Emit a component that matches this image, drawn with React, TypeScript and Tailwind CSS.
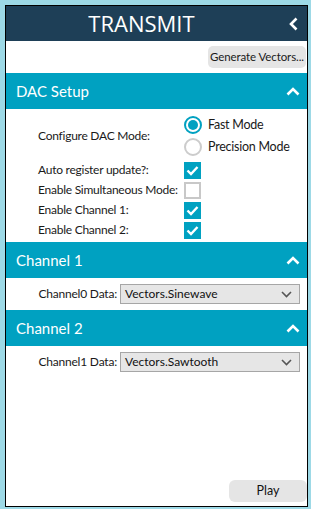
import React from "react";

const font = { fontFamily: 'Lato, "Open Sans", sans-serif' };
const titleFont = { fontFamily: '"Open Sans", sans-serif' };

function ChevronUp() {
  return (
    <svg width="14" height="9" viewBox="0 0 14 9" className="block">
      <polyline points="1.5,7.5 7,2 12.5,7.5" fill="none" stroke="white" strokeWidth="2.6" strokeLinecap="butt" strokeLinejoin="miter" />
    </svg>
  );
}

function SectionHeader({ title }: { title: string }) {
  return (
    <div className="h-[36px] bg-[#00a1c1] flex items-center justify-between pl-[10px] pr-[7px]">
      <span className="text-white text-[15px]">{title}</span>
      <ChevronUp />
    </div>
  );
}

function Checkbox({ checked }: { checked: boolean }) {
  return checked ? (
    <div className="w-[17px] h-[17px] bg-[#00a1c1] flex items-center justify-center">
      <svg width="13" height="11" viewBox="0 0 13 11">
        <polyline points="1.5,5.5 5,9 11.5,2" fill="none" stroke="white" strokeWidth="2.4" />
      </svg>
    </div>
  ) : (
    <div className="w-[17px] h-[17px] border-2 border-[#c8c8c8] bg-white" />
  );
}

function Radio({ checked }: { checked: boolean }) {
  return checked ? (
    <div className="w-[18px] h-[18px] rounded-full border-[2px] border-[#00a1c1] flex items-center justify-center">
      <div className="w-[10px] h-[10px] rounded-full bg-[#00a1c1]" />
    </div>
  ) : (
    <div className="w-[18px] h-[18px] rounded-full border-[2px] border-[#cccccc]" />
  );
}

function SelectRow({ label, value }: { label: string; value: string }) {
  return (
    <div className="h-[32px] flex items-center pl-[32px] pr-[7px]">
      <span className="text-[12px] tracking-[-0.2px] text-[#1a1a1a] w-[79px] whitespace-nowrap text-right">{label}</span>
      <div className="flex-1 h-[20px] ml-[3px] bg-[#e6e6e6] border border-[#a6a6a6] flex items-center justify-between pl-[4px] pr-[7px]">
        <span className="text-[12px] text-[#111]">{value}</span>
        <svg width="11" height="7" viewBox="0 0 11 7">
          <polyline points="1,1 5.5,5.5 10,1" fill="none" stroke="#555" strokeWidth="1.6" />
        </svg>
      </div>
    </div>
  );
}

export default function App() {
  const checks: [string, boolean][] = [
    ["Auto register update?:", true],
    ["Enable Simultaneous Mode:", false],
    ["Enable Channel 1:", true],
    ["Enable Channel 2:", true],
  ];
  return (
    <div className="w-[311px] h-[509px] bg-[#9dd9e6] pt-[5px] pl-[5px] pr-[3px] pb-[2px]" style={font}>
      <div className="h-full border border-black bg-white flex flex-col">
        <div className="h-[35px] bg-[#1e3f57] relative flex items-center justify-center">
          <span className="text-white text-[22px] mr-[30px]" style={titleFont}>TRANSMIT</span>
          <svg className="absolute right-[9px] top-[11px]" width="9" height="14" viewBox="0 0 9 14">
            <polyline points="7.5,1.5 2,7 7.5,12.5" fill="none" stroke="white" strokeWidth="2.6" />
          </svg>
        </div>
        <div className="h-[32px] flex items-center justify-end pr-[1px]">
          <button className="h-[22px] w-[98px] bg-[#e5e5e5] rounded-[5px] text-[11.5px] tracking-[-0.1px] text-[#1a1a1a] whitespace-nowrap">
            Generate Vectors...
          </button>
        </div>
        <SectionHeader title="DAC Setup" />
        <div className="pt-[5px] pb-[2px] pl-[32px] text-[12px] tracking-[-0.25px] text-[#1a1a1a]">
          <div className="flex items-center">
            <span className="w-[146px]">Configure DAC Mode:</span>
            <div className="flex flex-col">
              <div className="h-[22px] flex items-center gap-[6px]">
                <Radio checked />
                <span className="text-[12.5px]">Fast Mode</span>
              </div>
              <div className="h-[22px] flex items-center gap-[6px]">
                <Radio checked={false} />
                <span className="text-[12.5px]">Precision Mode</span>
              </div>
            </div>
          </div>
          <div className="mt-[2px]">
            {checks.map(([l, c]) => (
              <div key={l} className="h-[20px] flex items-center">
                <span className="w-[146px] whitespace-nowrap">{l}</span>
                <Checkbox checked={c} />
              </div>
            ))}
          </div>
        </div>
        <SectionHeader title="Channel 1" />
        <SelectRow label="Channel0 Data:" value="Vectors.Sinewave" />
        <SectionHeader title="Channel 2" />
        <SelectRow label="Channel1 Data:" value="Vectors.Sawtooth" />
        <div className="flex-1" />
        <div className="flex justify-end pb-[4px]">
          <button className="w-[78px] h-[22px] bg-[#e5e5e5] rounded-[6px] text-[12.5px] text-[#111]">Play</button>
        </div>
      </div>
    </div>
  );
}
